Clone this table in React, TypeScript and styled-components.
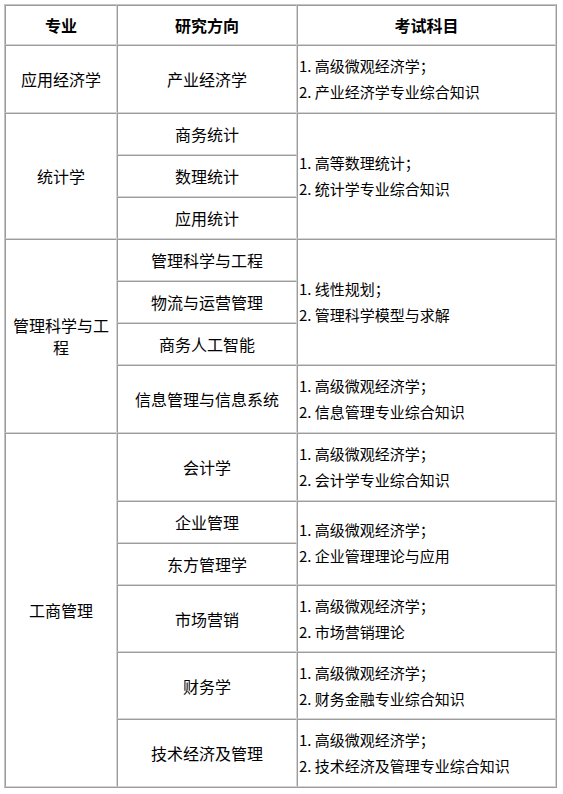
import React from 'react';
import styled, {createGlobalStyle} from 'styled-components';

type Row = {
    major?: {name: string, span: number};
    direction: string;
    exam?: {lines: string[], span: number};
    h: number;
};

const GlobalStyle = createGlobalStyle`
    html, body {
        margin: 0;
        padding: 0;
        background: #ffffff;
    }
    body {
        font-family: "Noto Sans CJK SC", "Liberation Sans", sans-serif;
        color: #000000;
    }
`;

const Page = styled.div`
    padding: 4px 0 0 4px;
`;

const Table = styled.table`
    width: 553px;
    border-collapse: separate;
    border-spacing: 0;
    border: 1px solid;
    border-color: #c4c4c4 #9c9c9c #9c9c9c #c4c4c4;
    table-layout: fixed;
    font-size: 16px;
`;

const Col = styled.col<{$w: number}>`
    width: ${(p) => p.$w}px;
`;

const HeadCell = styled.th`
    height: 38px;
    padding: 0;
    font-weight: bold;
    text-align: center;
    vertical-align: middle;
    border: 1px solid;
    border-color: #9c9c9c #d4d4d4 #d4d4d4 #9c9c9c;
`;

const Cell = styled.td<{$h?: number}>`
    height: ${(p) => (p.$h ? p.$h + 'px' : 'auto')};
    padding: 0 2px;
    text-align: center;
    vertical-align: middle;
    line-height: 22px;
    border: 1px solid;
    border-color: #9c9c9c #d4d4d4 #d4d4d4 #9c9c9c;
`;

const ExamCell = styled(Cell)`
    padding: 0 0 0 1px;
    text-align: left;
    font-size: 15px;
    line-height: 26px;
`;

const Line = styled.div`
    white-space: nowrap;
`;

const econ = '1. 高级微观经济学；';

const rows: Row[] = [
    {major: {name: '应用经济学', span: 1}, direction: '产业经济学', exam: {lines: [econ, '2. 产业经济学专业综合知识'], span: 1}, h: 68},
    {major: {name: '统计学', span: 3}, direction: '商务统计', exam: {lines: ['1. 高等数理统计；', '2. 统计学专业综合知识'], span: 3}, h: 42},
    {direction: '数理统计', h: 42},
    {direction: '应用统计', h: 42},
    {major: {name: '管理科学与工程', span: 4}, direction: '管理科学与工程', exam: {lines: ['1. 线性规划；', '2. 管理科学模型与求解'], span: 3}, h: 42},
    {direction: '物流与运营管理', h: 42},
    {direction: '商务人工智能', h: 42},
    {direction: '信息管理与信息系统', exam: {lines: [econ, '2. 信息管理专业综合知识'], span: 1}, h: 68},
    {major: {name: '工商管理', span: 6}, direction: '会计学', exam: {lines: [econ, '2. 会计学专业综合知识'], span: 1}, h: 68},
    {direction: '企业管理', exam: {lines: [econ, '2. 企业管理理论与应用'], span: 2}, h: 42},
    {direction: '东方管理学', h: 42},
    {direction: '市场营销', exam: {lines: [econ, '2. 市场营销理论'], span: 1}, h: 67},
    {direction: '财务学', exam: {lines: [econ, '2. 财务金融专业综合知识'], span: 1}, h: 67},
    {direction: '技术经济及管理', exam: {lines: [econ, '2. 技术经济及管理专业综合知识'], span: 1}, h: 68},
];

export default function App() {
    return (
        <Page>
            <GlobalStyle/>
            <Table>
                <colgroup>
                    <Col $w={112}/>
                    <Col $w={180}/>
                    <Col $w={259}/>
                </colgroup>
                <thead>
                    <tr>
                        <HeadCell>专业</HeadCell>
                        <HeadCell>研究方向</HeadCell>
                        <HeadCell>考试科目</HeadCell>
                    </tr>
                </thead>
                <tbody>
                    {rows.map((r, i) => (
                        <tr key={i}>
                            {r.major && <Cell rowSpan={r.major.span}>{r.major.name}</Cell>}
                            <Cell $h={r.h - 2}>{r.direction}</Cell>
                            {r.exam && (
                                <ExamCell rowSpan={r.exam.span}>
                                    {r.exam.lines.map((l) => <Line key={l}>{l}</Line>)}
                                </ExamCell>
                            )}
                        </tr>
                    ))}
                </tbody>
            </Table>
        </Page>
    );
}
